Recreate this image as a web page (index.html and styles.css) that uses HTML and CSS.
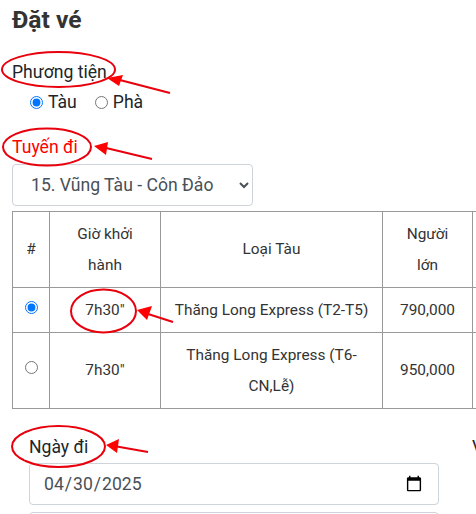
FILE: index.html
```html
<!DOCTYPE html>
<html lang="vi">
<head>
    <meta charset="UTF-8">
    <title>Đặt vé</title>
    <link rel="stylesheet" href="styles.css">
</head>
<body>
    <div class="page">
        <h1>Đặt vé</h1>

        <div class="field-label">Phương tiện</div>
        <div class="radio-row">
            <label class="radio"><input type="radio" name="vehicle" checked> Tàu</label>
            <label class="radio"><input type="radio" name="vehicle"> Phà</label>
        </div>

        <div class="field-label route-label">Tuyến đi</div>
        <select class="route-select">
            <option>15. Vũng Tàu - Côn Đảo</option>
        </select>

        <table class="trips">
            <thead>
                <tr>
                    <th class="col-pick">#</th>
                    <th class="col-time">Giờ khởi hành</th>
                    <th class="col-type">Loại Tàu</th>
                    <th class="col-price">Người lớn</th>
                    <th class="col-rest"></th>
                </tr>
            </thead>
            <tbody>
                <tr class="row-short">
                    <td class="pick"><input type="radio" name="trip" checked></td>
                    <td>7h30"</td>
                    <td>Thăng Long Express (T2-T5)</td>
                    <td>790,000</td>
                    <td></td>
                </tr>
                <tr>
                    <td class="pick"><input type="radio" name="trip"></td>
                    <td>7h30"</td>
                    <td>Thăng Long Express (T6-CN,Lễ)</td>
                    <td>950,000</td>
                    <td></td>
                </tr>
            </tbody>
        </table>

        <div class="date-row">
            <div class="date-col">
                <div class="field-label">Ngày đi</div>
                <input class="date-input" type="date" value="2025-04-30">
                <div class="next-input"></div>
            </div>
            <div class="side-col">Vé</div>
        </div>
    </div>

    <!-- red marks drawn over the screenshot -->
    <svg class="marks" width="476" height="514" viewBox="0 0 476 514">
        <ellipse cx="58.5" cy="69.5" rx="56.5" ry="17.5"/>
        <ellipse cx="47" cy="147" rx="44" ry="18.5"/>
        <ellipse cx="103.5" cy="311" rx="32.5" ry="21.5"/>
        <ellipse cx="58.5" cy="446.5" rx="46.5" ry="20.5"/>
        <path d="M170 93L116 79"/>
        <path class="tip" d="M107 78L123 75L119 86Z"/>
        <path d="M152 159L102 147"/>
        <path class="tip" d="M94 146L108 142L106 155Z"/>
        <path d="M173 322L145 313"/>
        <path class="tip" d="M137 310L152 306L147 320Z"/>
        <path d="M148 452L114 446"/>
        <path class="tip" d="M106 445L119 439L117 453Z"/>
    </svg>
</body>
</html>
```

FILE: styles.css
```css
* {
    box-sizing: border-box;
}
html, body {
    margin: 0;
    padding: 0;
    height: 100%;
    overflow: hidden;
    background: #fff;
}
body {
    position: relative;
    font-family: Roboto, "Liberation Sans", sans-serif;
    font-size: 16px;
    color: #212529;
}
.page {
    width: 700px;
    padding: 5px 0 0 12px;
}
h1 {
    margin: 0 0 26px;
    font-size: 24.6px;
    line-height: 29px;
    font-weight: 700;
    color: #333;
}
.field-label {
    font-size: 17.6px;
    line-height: 24px;
}
.radio-row {
    display: flex;
    gap: 18px;
    margin: 6px 0 0 18px;
    height: 24px;
}
.radio {
    display: flex;
    align-items: center;
    gap: 5px;
    font-size: 17.6px;
}
.radio input {
    width: 13px;
    height: 13px;
    margin: 0;
}
.route-label {
    margin-top: 21px;
    color: #f00;
}
.route-select {
    display: block;
    width: 241px;
    height: 42px;
    margin: 5px 0 5px;
    padding: 0 12px 0 14px;
    font-family: inherit;
    font-size: 17.6px;
    color: #495057;
    background: #fff;
    border: 1px solid #ced4da;
    border-radius: 4px;
}
.trips {
    width: 461px;
    table-layout: fixed;
    border-collapse: collapse;
    font-size: 15.4px;
    line-height: 31px;
    color: #333;
    text-align: center;
}
.trips th, .trips td {
    border: 1px solid #999;
    padding: 6.5px 12px;
    font-weight: 400;
}
.col-pick { width: 37px; }
.col-time { width: 111px; }
.col-type { width: 222px; }
.col-price { width: 90px; }
.col-rest { width: 40px; }
.trips .pick {
    padding: 0;
}
.pick input {
    width: 13px;
    height: 13px;
    margin: 0 0 6px;
    vertical-align: middle;
}
.date-row {
    display: flex;
    margin-top: 26px;
}
.date-col {
    width: 460px;
}
.side-col {
    font-size: 17.6px;
    line-height: 24px;
}
.date-col .field-label {
    padding-left: 17px;
}
.date-input {
    display: block;
    width: 410px;
    height: 42px;
    margin: 4px 0 7px 17px;
    padding: 6px 13px;
    font-family: inherit;
    font-size: 17.6px;
    color: #495057;
    background: #fff;
    border: 1px solid #ced4da;
    border-radius: 4px;
}
.next-input {
    width: 410px;
    height: 42px;
    margin-left: 17px;
    border: 1px solid #ced4da;
    border-radius: 4px;
}
.marks {
    position: absolute;
    top: 0;
    left: 0;
    fill: none;
    stroke: #e8000d;
    stroke-width: 2;
}
.marks .tip {
    fill: #f00;
    stroke: none;
}
```
